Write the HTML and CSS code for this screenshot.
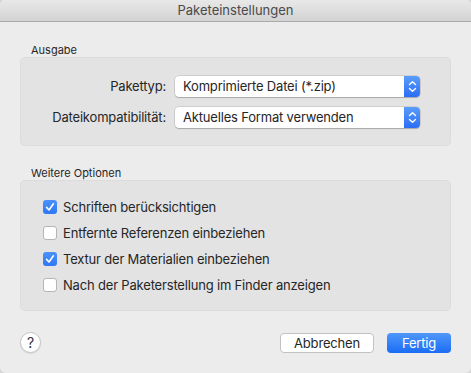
FILE: index.html
```html
<!DOCTYPE html>
<html lang="de">
<head>
  <meta charset="UTF-8">
  <title>Paketeinstellungen</title>
  <link rel="stylesheet" href="styles.css">
</head>
<body>
  <div class="window">
    <div class="titlebar">Paketeinstellungen</div>

    <div class="content">
      <div class="group-label">Ausgabe</div>
      <div class="group output">
        <label class="field-label">Pakettyp:</label>
        <div class="popup">
          <span class="popup-text">Komprimierte Datei (*.zip)</span>
          <span class="popup-arrows">
            <svg width="9" height="13" viewBox="0 0 9 13"><path d="M1.5 4.5 L4.5 1.8 L7.5 4.5 M1.5 8.5 L4.5 11.2 L7.5 8.5" fill="none" stroke="#fff" stroke-width="1.4" stroke-linecap="round" stroke-linejoin="round"/></svg>
          </span>
        </div>
        <label class="field-label">Dateikompatibilität:</label>
        <div class="popup">
          <span class="popup-text">Aktuelles Format verwenden</span>
          <span class="popup-arrows">
            <svg width="9" height="13" viewBox="0 0 9 13"><path d="M1.5 4.5 L4.5 1.8 L7.5 4.5 M1.5 8.5 L4.5 11.2 L7.5 8.5" fill="none" stroke="#fff" stroke-width="1.4" stroke-linecap="round" stroke-linejoin="round"/></svg>
          </span>
        </div>
      </div>

      <div class="group-label second">Weitere Optionen</div>
      <div class="group options">
        <div class="check-row">
          <span class="checkbox checked">
            <svg width="14" height="14" viewBox="0 0 14 14"><path d="M3.6 7.4 L6 10 L10.4 3.8" fill="none" stroke="#fff" stroke-width="1.6" stroke-linecap="round" stroke-linejoin="round"/></svg>
          </span>
          Schriften berücksichtigen
        </div>
        <div class="check-row">
          <span class="checkbox"></span>
          Entfernte Referenzen einbeziehen
        </div>
        <div class="check-row">
          <span class="checkbox checked">
            <svg width="14" height="14" viewBox="0 0 14 14"><path d="M3.6 7.4 L6 10 L10.4 3.8" fill="none" stroke="#fff" stroke-width="1.6" stroke-linecap="round" stroke-linejoin="round"/></svg>
          </span>
          Textur der Materialien einbeziehen
        </div>
        <div class="check-row">
          <span class="checkbox"></span>
          Nach der Paketerstellung im Finder anzeigen
        </div>
      </div>

      <div class="footer">
        <button class="help">?</button>
        <div class="actions">
          <button class="btn">Abbrechen</button>
          <button class="btn primary">Fertig</button>
        </div>
      </div>
    </div>
  </div>
</body>
</html>
```

FILE: styles.css
```css
html, body {
  margin: 0;
  padding: 0;
  background: #d6d6d6;
}

body {
  font-family: Inter, "Liberation Sans", sans-serif;
  font-size: 13px;
  letter-spacing: -0.18px;
  color: #262626;
}

.window {
  width: 471px;
  height: 373px;
  background: #ececec;
  border-radius: 5px 5px 6px 6px;
  overflow: hidden;
  display: flex;
  flex-direction: column;
}

.titlebar {
  height: 21px;
  line-height: 21px;
  text-align: center;
  font-size: 13px;
  letter-spacing: 0;
  color: #4a4a4a;
  background: linear-gradient(#e8e8e8, #d3d3d3);
  border-bottom: 1px solid #ababab;
}

.content {
  flex: 1;
  display: flex;
  flex-direction: column;
  padding: 0 20px;
}

.group-label {
  font-size: 11px;
  line-height: 14px;
  letter-spacing: 0;
  color: #262626;
  margin: 21px 0 0 11px;
  height: 14px;
}

.group-label.second {
  margin-top: 20px;
}

.group {
  background: #e3e3e3;
  border: 1px solid #dcdcdc;
  border-radius: 5px;
}

.output {
  height: 87px;
  display: grid;
  grid-template-columns: 145px 245px;
  column-gap: 9px;
  row-gap: 10px;
  align-content: center;
  align-items: center;
}

.field-label {
  text-align: right;
}

.popup {
  height: 21px;
  display: flex;
  background: #fff;
  border-radius: 4px;
  box-shadow: 0 0 0 0.5px rgba(0,0,0,0.18), 0 1px 1px rgba(0,0,0,0.18);
  overflow: hidden;
}

.popup-text {
  flex: 1;
  padding-left: 8px;
  line-height: 21px;
}

.popup-arrows {
  width: 16px;
  display: flex;
  align-items: center;
  justify-content: center;
  background: linear-gradient(#5b9df9, #2a6ef6);
}

.options {
  height: 129px;
  display: flex;
  flex-direction: column;
  justify-content: center;
  padding-left: 22px;
}

.check-row {
  height: 26px;
  display: flex;
  align-items: center;
  gap: 6px;
}

.checkbox {
  width: 14px;
  height: 14px;
  box-sizing: border-box;
  border-radius: 3px;
  background: #fff;
  border: 1px solid #b5b5b5;
  display: flex;
}

.checkbox.checked {
  border: none;
  background: linear-gradient(#4a92f8, #2f77f5);
}

.footer {
  margin-top: 21px;
  display: flex;
  justify-content: space-between;
  align-items: center;
}

.help {
  width: 21px;
  height: 21px;
  border-radius: 50%;
  border: 1px solid #c4c4c4;
  background: #fff;
  font-family: inherit;
  font-size: 14px;
  color: #333;
  padding: 0;
  box-shadow: 0 1px 1px rgba(0,0,0,0.08);
}

.actions {
  display: flex;
  gap: 13px;
}

.btn {
  height: 20px;
  padding: 0;
  width: 94px;
  font-family: inherit;
  font-size: 13px;
  letter-spacing: -0.18px;
  color: #262626;
  background: #fff;
  border: 1px solid #c2c2c2;
  border-radius: 4px;
}

.btn.primary {
  width: 64px;
  color: #fff;
  border: none;
  background: linear-gradient(#4f97f8, #1b6cf5);
}
```
